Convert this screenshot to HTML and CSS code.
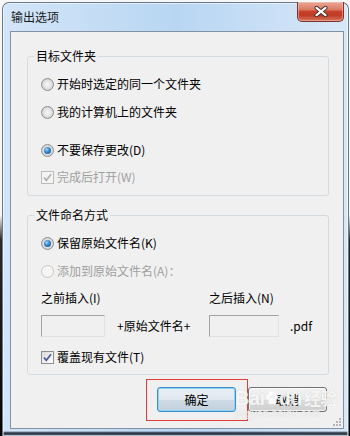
FILE: index.html
```html
<!DOCTYPE html>
<html lang="zh-CN">
<head>
    <meta charset="UTF-8">
    <meta name="viewport" content="width=device-width, initial-scale=1.0">
    <title>输出选项</title>
    <link rel="stylesheet" href="styles.css">
</head>
<body>
    <div class="window">
        <div class="titlebar">
            <span class="title">输出选项</span>
            <div class="close-btn">
                <svg width="14" height="11" viewBox="0 0 14 11">
                    <path d="M2.5 1.8 L11.5 9.2 M11.5 1.8 L2.5 9.2" stroke="#3a2626" stroke-width="4" stroke-linecap="round"/>
                    <path d="M2.5 1.8 L11.5 9.2 M11.5 1.8 L2.5 9.2" stroke="#ffffff" stroke-width="2.2" stroke-linecap="round"/>
                </svg>
            </div>
        </div>

        <div class="client">
            <div class="group group-target">
                <div class="group-title">目标文件夹</div>
                <div class="row row-first"><span class="radio"></span>开始时选定的同一个文件夹</div>
                <div class="row row-next"><span class="radio"></span>我的计算机上的文件夹</div>
                <div class="row row-wide"><span class="radio checked"></span>不要保存更改(D)</div>
                <div class="row row-check disabled">
                    <span class="check">
                        <svg width="11" height="11" viewBox="0 0 11 11"><polyline points="2,5.5 4.3,8.3 9,2.2" fill="none" stroke-width="1.7"/></svg>
                    </span>完成后打开(W)
                </div>
            </div>

            <div class="group group-naming">
                <div class="group-title">文件命名方式</div>
                <div class="row row-first"><span class="radio checked"></span>保留原始文件名(K)</div>
                <div class="row row-next disabled"><span class="radio"></span>添加到原始文件名(A)：</div>
                <div class="insert-grid">
                    <span class="insert-label">之前插入(I)</span>
                    <span></span>
                    <span class="insert-label">之后插入(N)</span>
                    <span></span>
                    <span class="textbox"></span>
                    <span class="joiner">+原始文件名+</span>
                    <span class="textbox"></span>
                    <span class="ext">.pdf</span>
                </div>
                <div class="row row-overwrite">
                    <span class="check">
                        <svg width="11" height="11" viewBox="0 0 11 11"><polyline points="2,5.5 4.3,8.3 9,2.2" fill="none" stroke-width="1.7"/></svg>
                    </span>覆盖现有文件(T)
                </div>
            </div>

            <div class="buttons">
                <div class="highlight">
                    <div class="btn btn-default">确定</div>
                </div>
                <div class="btn btn-cancel">取消</div>
            </div>

            <svg class="grip" width="10" height="10" viewBox="0 0 10 10">
                <rect x="7" y="1" width="2" height="2" fill="#b5b5b5"/>
                <rect x="4" y="4" width="2" height="2" fill="#b5b5b5"/>
                <rect x="7" y="4" width="2" height="2" fill="#b5b5b5"/>
                <rect x="1" y="7" width="2" height="2" fill="#b5b5b5"/>
                <rect x="4" y="7" width="2" height="2" fill="#b5b5b5"/>
                <rect x="7" y="7" width="2" height="2" fill="#b5b5b5"/>
            </svg>
        </div>

        <div class="watermark">
            <div class="wm-logo">Bai<svg class="paw" width="14" height="15" viewBox="0 0 14 15">
                <ellipse cx="3" cy="6" rx="1.8" ry="2.3"/>
                <ellipse cx="5.5" cy="2.6" rx="1.8" ry="2.3"/>
                <ellipse cx="9" cy="2.6" rx="1.8" ry="2.3"/>
                <ellipse cx="11.4" cy="6" rx="1.8" ry="2.3"/>
                <path d="M7.2 6.5 C4.5 6.5 3 10 3.5 12 C4 14 6 13 7.2 13 C8.4 13 10.4 14 10.9 12 C11.4 10 9.9 6.5 7.2 6.5 Z"/>
            </svg>du<span class="wm-cn">经验</span></div>
            <div class="wm-url">jingyan.baidu.com</div>
        </div>
    </div>
</body>
</html>
```

FILE: styles.css
```css
body {
    margin: 0;
    width: 350px;
    height: 436px;
    overflow: hidden;
    font-family: "Noto Sans CJK SC", "Noto Sans", sans-serif;
    font-size: 12px;
    color: #000000;
    background: linear-gradient(to bottom, #f7f7f7 0, #f7f7f7 215px, #2a2a2a 240px, #050505 100%);
}

.window {
    position: relative;
    margin: 2px 1px 0 2px;
    height: 434px;
    box-sizing: border-box;
    border: 1px solid #67798c;
    border-bottom: none;
    border-radius: 7px 7px 0 0;
    padding: 0 4px 0 7px;
    display: flex;
    flex-direction: column;
    box-shadow: inset 0 0 0 1px rgba(255, 255, 255, 0.55);
    background:
        linear-gradient(to bottom, rgba(0, 0, 0, 0) 0, rgba(0, 0, 0, 0) calc(100% - 5px), #1f2a37 calc(100% - 3px), #63778e 100%),
        linear-gradient(to right, #d3e5f8 0%, #c3dcf4 30%, #b8d6f3 50%, #c8def5 75%, #d7e8f8 100%);
}

.titlebar {
    height: 28px;
    display: flex;
    justify-content: space-between;
    align-items: flex-start;
    padding-left: 1px;
}

.title {
    margin-top: 6px;
    line-height: 16px;
    color: #1b1b1b;
}

.close-btn {
    width: 47px;
    height: 20px;
    margin-top: -1px;
    box-sizing: border-box;
    border: 1px solid #7b3427;
    border-top: none;
    border-radius: 0 0 5px 5px;
    display: flex;
    align-items: center;
    justify-content: center;
    background: linear-gradient(to bottom, #e9a897 0, #dc7a63 40%, #c8412a 50%, #c13b24 70%, #d8775f 100%);
    box-shadow: inset 0 0 0 1px rgba(255, 210, 200, 0.45);
}

.client {
    position: relative;
    height: 398px;
    box-sizing: border-box;
    border: 1px solid #8292a3;
    background: #f0f0f0;
}

.group {
    margin: 0 14px 0 16px;
    border: 1px solid #d3dbe0;
    border-radius: 3px;
    padding: 0 0 0 13px;
}

.group-target {
    margin-top: 24px;
    padding-bottom: 10px;
}

.group-naming {
    margin-top: 19px;
    padding-bottom: 9px;
}

.group-title {
    width: fit-content;
    margin: -9px 0 0 -7px;
    padding: 0 2px;
    line-height: 16px;
    background: #f0f0f0;
}

.row {
    height: 16px;
    display: flex;
    align-items: center;
    gap: 3px;
    line-height: 16px;
    white-space: nowrap;
}

.row-first { margin-top: 12px; }
.row-next { margin-top: 12px; }
.row-wide { margin-top: 22px; }
.row-check { margin-top: 11px; }
.row-overwrite { margin-top: 12px; }

.disabled {
    color: #a0a0a0;
}

.radio {
    position: relative;
    flex: none;
    width: 13px;
    height: 13px;
    box-sizing: border-box;
    border-radius: 50%;
    border: 1px solid #8e8f8f;
    background: radial-gradient(circle at 50% 50%, #f7f7f7 0, #e7e7e7 40%, #cdcdcd 78%, #ebebeb 100%);
}

.radio.checked::after {
    content: "";
    position: absolute;
    left: 2px;
    top: 2px;
    width: 7px;
    height: 7px;
    border-radius: 50%;
    background: radial-gradient(circle at 38% 35%, #a8dcff 0, #3a8ad0 40%, #0f4a86 100%);
}

.disabled .radio {
    border-color: #c6c6c6;
    background: #f5f5f5;
}

.check {
    flex: none;
    width: 13px;
    height: 13px;
    box-sizing: border-box;
    border: 1px solid #8e8f8f;
    display: flex;
    align-items: center;
    justify-content: center;
    background: linear-gradient(135deg, #dadada 0, #f4f4f4 70%, #ffffff 100%);
}

.check polyline {
    stroke: #4b5f96;
}

.disabled .check {
    border-color: #bcbcbc;
    background: #f4f4f4;
}

.disabled .check polyline {
    stroke: #b0b0b0;
}

.insert-grid {
    margin-top: 11px;
    display: grid;
    grid-template-columns: 64px 104px 70px 1fr;
    grid-template-rows: 16px 22px;
    row-gap: 9px;
    align-items: center;
    line-height: 16px;
    white-space: nowrap;
}

.textbox {
    height: 22px;
    box-sizing: border-box;
    border: 1px solid;
    border-color: #a3a3a3 #e2e2e2 #e2e2e2 #a3a3a3;
    background: #f0f0f0;
}

.joiner {
    padding-left: 12px;
}

.ext {
    padding-left: 11px;
}

.buttons {
    margin-top: 4px;
    padding-right: 16px;
    display: flex;
    justify-content: flex-end;
    align-items: flex-start;
}

.highlight {
    border: 1px solid #e23c3c;
    padding: 7px 11px 8px 10px;
}

.btn {
    width: 79px;
    height: 25px;
    box-sizing: border-box;
    border: 1px solid #707070;
    border-radius: 3px;
    display: flex;
    align-items: center;
    justify-content: center;
    line-height: 16px;
    background: linear-gradient(to bottom, #f2f2f2 0, #ebebeb 50%, #dddddd 50%, #cfcfcf 100%);
    box-shadow: inset 0 0 0 1px rgba(255, 255, 255, 0.75);
}

.btn-default {
    border-color: #3c8fcf;
    background: linear-gradient(to bottom, #e9eff4 0, #e0e8ef 50%, #cfdbe5 50%, #c3d2de 100%);
    box-shadow: inset 0 0 0 1px #8fd3f3;
}

.btn-cancel {
    margin-top: 8px;
}

.grip {
    position: absolute;
    right: 1px;
    bottom: 1px;
}

.watermark {
    position: absolute;
    left: 232px;
    top: 383px;
    color: rgba(255, 255, 255, 0.85);
    text-shadow: 0 0 1px rgba(120, 120, 120, 0.35);
    pointer-events: none;
}

.wm-logo {
    display: flex;
    align-items: flex-end;
    font-family: "Liberation Sans", Arial, sans-serif;
    font-weight: bold;
    font-size: 20px;
    line-height: 24px;
    letter-spacing: -0.5px;
}

.paw {
    margin: 0 0 4px 0;
    fill: rgba(255, 255, 255, 0.85);
}

.wm-cn {
    margin-left: 2px;
    font-family: "Noto Sans CJK SC", sans-serif;
    font-size: 17px;
}

.wm-url {
    margin-top: -2px;
    font-family: "Liberation Sans", Arial, sans-serif;
    font-size: 10px;
    line-height: 12px;
    letter-spacing: 0.3px;
}
```
